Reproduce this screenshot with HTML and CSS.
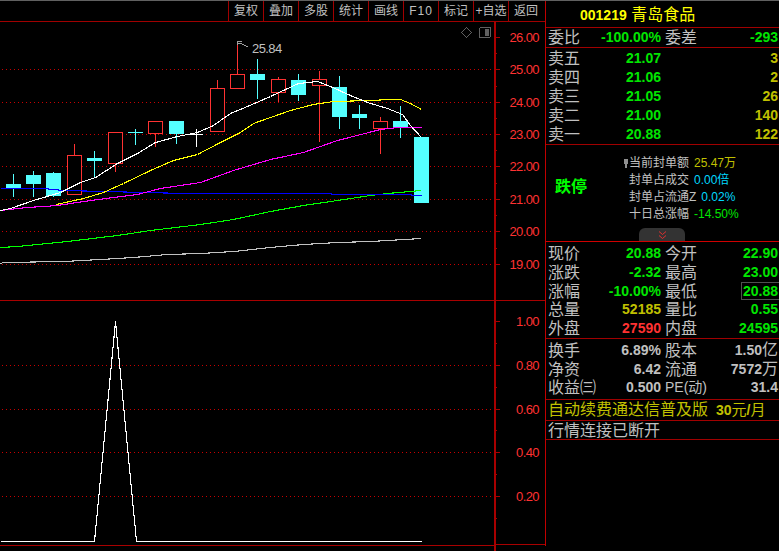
FILE: index.html
```html
<!DOCTYPE html>
<html lang="zh-CN">
<head>
  <meta charset="UTF-8">
  <title>001219 青岛食品</title>
  <link rel="stylesheet" href="styles.css">
</head>
<body>
<div class="page">
  <div class="main">
    <div class="toolbar">
      <span>复权</span><span>叠加</span><span>多股</span><span>统计</span><span>画线</span><span class="latin">F10</span><span>标记</span><span>+自选</span><span>返回</span>
    </div>
    <svg class="chart" width="545" height="529" viewBox="0 22 545 529">
      <!-- 网格 -->
      <g class="grid">
        <path d="M2 69.5H494M2 102.5H494M2 134.5H494M2 166.5H494M2 199.5H494M2 231.5H494M2 264.5H494"/>
        <path d="M2 365.5H494M2 409.5H494M2 452.5H494M2 496.5H494"/>
      </g>
      <!-- 边框和刻度 -->
      <g class="frame">
        <path d="M0 300.5H545M0 545.5H494M494.5 22V551M495.5 22V551M495 544.5H545"/>
        <path d="M495 37.5H500M495 69.5H500M495 102.5H500M495 134.5H500M495 166.5H500M495 199.5H500M495 231.5H500M495 264.5H500"/>
        <path d="M495 53.5H497M495 86.5H497M495 118.5H497M495 150.5H497M495 183.5H497M495 215.5H497M495 248.5H497"/>
        <path d="M495 321.5H500M495 365.5H500M495 409.5H500M495 452.5H500M495 496.5H500"/>
        <path d="M495 343.5H497M495 387.5H497M495 430.5H497M495 474.5H497M495 518.5H497"/>
      </g>
      <g class="axis">
        <text x="539" y="42">26.00</text>
        <text x="539" y="74">25.00</text>
        <text x="539" y="107">24.00</text>
        <text x="539" y="139">23.00</text>
        <text x="539" y="171">22.00</text>
        <text x="539" y="204">21.00</text>
        <text x="539" y="236">20.00</text>
        <text x="539" y="269">19.00</text>
        <text x="539" y="326">1.00</text>
        <text x="539" y="370">0.80</text>
        <text x="539" y="414">0.60</text>
        <text x="539" y="457">0.40</text>
        <text x="539" y="501">0.20</text>
      </g>
      <!-- 右上角小图标 -->
      <path class="icon-line" d="M466.5 27.5L471.5 32.5L466.5 37.5L461.5 32.5Z"/>
      <rect class="icon-line" x="479.5" y="27.5" width="11" height="10" rx="1.5"/>
      <rect class="icon-fill" x="485" y="29" width="4" height="7"/>
      <!-- K线 -->
      <g class="wick-down">
        <path d="M13.5 174V197M33.5 171V197M53.5 172V197M94.5 151V177M135.5 129V145M176.5 134V144M257.5 59V99M298.5 74V101M339.5 76V129M359.5 105V129M400.5 106V138"/>
      </g>
      <g class="wick-up">
        <path d="M74.5 144V155M115.5 164V172M155.5 134V147M217.5 80V88M237.5 45V74M278.5 77V79M278.5 92V102M319.5 71V79M319.5 85V142M380.5 117V121M380.5 128V154"/>
      </g>
      <g class="body-down">
        <rect x="6" y="184" width="15" height="5"/>
        <rect x="26" y="175" width="15" height="9"/>
        <rect x="46" y="173" width="15" height="23"/>
        <rect x="87" y="158" width="15" height="3"/>
        <rect x="128" y="132" width="15" height="1"/>
        <rect x="169" y="121" width="15" height="13"/>
        <rect x="250" y="74" width="15" height="6"/>
        <rect x="291" y="80" width="15" height="15"/>
        <rect x="332" y="87" width="15" height="30"/>
        <rect x="352" y="114" width="15" height="4"/>
        <rect x="393" y="121" width="15" height="6"/>
        <rect x="414" y="137" width="15" height="66"/>
      </g>
      <g class="body-up">
        <rect x="67.5" y="155.5" width="14" height="39"/>
        <rect x="108.5" y="132.5" width="14" height="31"/>
        <rect x="148.5" y="121.5" width="14" height="12"/>
        <rect x="210.5" y="88.5" width="14" height="43"/>
        <rect x="230.5" y="74.5" width="14" height="14"/>
        <rect x="271.5" y="79.5" width="14" height="13"/>
        <rect x="312.5" y="79.5" width="14" height="6"/>
        <rect x="373.5" y="121.5" width="14" height="7"/>
      </g>
      <path class="doji" d="M196.5 129V147M189 134.5H203"/>
      <!-- 均线 -->
      <polyline class="ma gray" points="0,263 3,262 63,261 100,259 133,257 167,254 200,253 233,251 270,247 303,244 337,242 370,241 421,238"/>
      <polyline class="ma green" points="0,247 17,246 67,241 117,235 150,230 200,224 233,219 270,211 303,205 337,200 370,195 387,193 421,190"/>
      <polyline class="ma blue" points="0,188 43,188 63,190 105,191 143,192 187,193 330,193 332,194 410,194 412,195 421,195"/>
      <polyline class="ma magenta" points="0,210 27,207 43,206 57,205 83,201 113,197 137,194 160,188 200,182 233,170 270,159 303,152 337,140 380,129 397,127 421,127"/>
      <polyline class="ma yellow" points="56,204 83,198 103,192 123,183 150,170 173,160 197,154 220,142 240,132 253,123 270,117 290,110 313,104 333,101 370,100 390,99 400,99 410,103 421,109"/>
      <polyline class="ma white" points="0,210 10,208 33,200 60,192 80,182 95,177 117,163 137,153 155,142 177,136 197,132 213,125 230,113 247,106 270,96 285,89 298,83 317,81 330,86 350,95 367,102 387,108 402,114 410,125 421,137"/>
      <!-- 最高价标记 -->
      <path class="flag" d="M237.5 45V41.500H241.500M237.500 43.500H240.500M241 43.500L248 47"/>
      <text class="peak" x="252" y="53">25.84</text>
      <!-- 副图 -->
      <polyline class="ma white" points="0,541 94,541 115,321 136,541 421,541"/>
    </svg>
  </div>

  <div class="side">
    <div class="title"><b>001219</b> 青岛食品</div>
    <div class="block ratio">
      <div class="row"><span>委比</span><b class="green">-100.00%</b><span>委差</span><b class="green">-293</b></div>
    </div>
    <div class="block sells">
      <div class="row"><span>卖五</span><b class="green">21.07</b><span></span><b class="olive">3</b></div>
      <div class="row"><span>卖四</span><b class="green">21.06</b><span></span><b class="olive">2</b></div>
      <div class="row"><span>卖三</span><b class="green">21.05</b><span></span><b class="olive">26</b></div>
      <div class="row"><span>卖二</span><b class="green">21.00</b><span></span><b class="olive">140</b></div>
      <div class="row"><span>卖一</span><b class="green">20.88</b><span></span><b class="olive">122</b></div>
    </div>
    <div class="block limit">
      <div class="limit-name">跌停</div>
      <div class="limit-info">
        <div class="info-row">
          <svg class="pin" width="4" height="9" viewBox="0 0 4 9"><path d="M0 0H4V5H3V9H1V5H0Z"/></svg>
          <span>当前封单额</span><em class="olive">25.47万</em>
        </div>
        <div class="info-row"><span>封单占成交</span><em class="cyan">0.00倍</em></div>
        <div class="info-row"><span>封单占流通Z</span><em class="cyan">0.02%</em></div>
        <div class="info-row"><span>十日总涨幅</span><em class="green">-14.50%</em></div>
      </div>
      <div class="fold">
        <svg width="9" height="8" viewBox="0 0 9 8"><path d="M1 0.500L4.500 3.500L8 0.500M1 4.500L4.500 7.500L8 4.500"/></svg>
      </div>
    </div>
    <div class="block prices">
      <div class="row"><span>现价</span><b class="green">20.88</b><span>今开</span><b class="green">22.90</b></div>
      <div class="row"><span>涨跌</span><b class="green">-2.32</b><span>最高</span><b class="green">23.00</b></div>
      <div class="row"><span>涨幅</span><b class="green">-10.00%</b><span>最低</span><b class="green boxed">20.88</b></div>
      <div class="row"><span>总量</span><b class="olive">52185</b><span>量比</span><b class="green">0.55</b></div>
      <div class="row"><span>外盘</span><b class="red">27590</b><span>内盘</span><b class="green">24595</b></div>
    </div>
    <div class="block stats">
      <div class="row"><span>换手</span><b>6.89%</b><span>股本</span><b>1.50<i>亿</i></b></div>
      <div class="row"><span>净资</span><b>6.42</b><span>流通</span><b>7572<i>万</i></b></div>
      <div class="row"><span>收益㈢</span><b>0.500</b><span class="wide">PE(动)</span><b>31.4</b></div>
    </div>
    <div class="block notice"><span>自动续费通达信普及版</span><b>30<i>元</i>/<i>月</i></b></div>
    <div class="block status">行情连接已断开</div>
  </div>
</div>
</body>
</html>
```

FILE: styles.css
```css
* {
  margin: 0;
  padding: 0;
  box-sizing: border-box;
}

body {
  background-color: #000;
  color: #c0c0c0;
  font-family: "Liberation Sans", "Noto Sans CJK SC", sans-serif;
}

i {
  font-style: normal;
  font-weight: normal;
}

.page {
  display: flex;
  width: 779px;
  height: 551px;
  border-top: 1px solid #606060;
  overflow: hidden;
}

.main {
  width: 545px;
  flex: none;
}

/* 顶部按钮 */
.toolbar {
  display: flex;
  justify-content: flex-end;
  height: 21px;
  padding-right: 2px;
  border-bottom: 1px solid #a00000;
}

.toolbar span {
  width: 35px;
  border-left: 1px solid #a00000;
  font-size: 12px;
  line-height: 20px;
  text-align: center;
}

.toolbar .latin {
  letter-spacing: 1px;
}

/* 图表 */
.chart {
  display: block;
}

.grid path {
  fill: none;
  stroke: #c80000;
  stroke-dasharray: 1 3;
  shape-rendering: crispEdges;
}

.frame path {
  fill: none;
  stroke: #a80000;
  shape-rendering: crispEdges;
}

.axis text {
  fill: #ff3232;
  font-size: 13px;
  letter-spacing: -0.6px;
  text-anchor: end;
}

.icon-line {
  fill: none;
  stroke: #606060;
  shape-rendering: crispEdges;
}

.icon-fill {
  fill: #606060;
}

.wick-down path {
  stroke: #54ffff;
  shape-rendering: crispEdges;
}

.wick-up path {
  stroke: #ff3232;
  shape-rendering: crispEdges;
}

.body-down rect {
  fill: #54ffff;
}

.body-up rect {
  fill: #000;
  stroke: #ff3232;
  shape-rendering: crispEdges;
}

.doji {
  stroke: #fff;
  shape-rendering: crispEdges;
}

.ma {
  fill: none;
  stroke-width: 1.1;
  shape-rendering: crispEdges;
  transform: translate(0.5px, 0.5px);
}

.white { stroke: #fff; }
.yellow { stroke: #ffff00; }
.magenta { stroke: #ff00ff; }
.blue { stroke: #0000ff; }
.green { color: #00e600; }
.ma.green { stroke: #00ff00; }
.ma.gray { stroke: #c0c0c0; }
.olive { color: #c0c000; }
.red { color: #ff3232; }
.cyan { color: #00d8ff; }

.flag {
  fill: none;
  stroke: #a0a0a0;
  shape-rendering: crispEdges;
}

.peak {
  fill: #c0c0c0;
  font-size: 13px;
  letter-spacing: -0.6px;
}

/* 右侧盘口 */
.side {
  width: 234px;
  height: 545px;
  border-left: 1px solid #c00000;
}

.title {
  height: 27px;
  padding-left: 34px;
  border-bottom: 1px solid #a00000;
  color: #ffff00;
  font-size: 16px;
  line-height: 27px;
}

.title b {
  font-size: 14px;
}

.block {
  border-bottom: 1px solid #a00000;
}

.row {
  display: grid;
  grid-template-columns: 32px 81px 32px 1fr;
  align-items: center;
  height: 19px;
  padding: 0 1px 0 2px;
  font-size: 16px;
  line-height: 19px;
}

.row span {
  white-space: nowrap;
}

.row b {
  font-size: 14px;
  text-align: right;
  white-space: nowrap;
}

.row b i {
  font-size: 16px;
}

.row span:nth-child(3) {
  margin-left: 4px;
}

.ratio {
  height: 20px;
}

.sells {
  height: 97px;
  padding-top: 1px;
}

/* 封单信息 */
.limit {
  display: flex;
  position: relative;
  height: 97px;
  border-bottom-color: #d00000;
}

.limit-name {
  width: 83px;
  padding: 33px 0 0 9px;
  color: #00ff00;
  font-size: 16px;
  font-weight: bold;
  line-height: 18px;
}

.limit-info {
  padding-top: 10px;
}

.info-row {
  display: flex;
  gap: 5px;
  height: 17px;
  font-size: 12px;
  line-height: 17px;
}

.info-row em {
  font-style: normal;
}

.pin {
  align-self: center;
  margin: 0 -4px 0 -5px;
  fill: #909090;
}

.fold {
  display: flex;
  justify-content: center;
  align-items: center;
  position: absolute;
  left: 93px;
  bottom: 0;
  width: 46px;
  height: 13px;
  border-radius: 6px 6px 0 0;
  background-color: #333;
}

.fold path {
  fill: none;
  stroke: #e03030;
}

.prices {
  height: 97px;
  padding-top: 2px;
}

.prices .row {
  height: 18.800px;
}

.boxed {
  justify-self: end;
  width: 38px;
  margin-right: -1px;
  padding-right: 1px;
  border: 1px solid #505050;
  border-right: 0;
  line-height: 16px;
}

.stats {
  height: 61px;
  padding-top: 1px;
}

.wide {
  font-size: 14px;
}

.notice {
  display: flex;
  gap: 8px;
  height: 21px;
  padding-left: 2px;
  color: #c0c000;
  font-size: 16px;
  line-height: 20px;
}

.notice b {
  font-size: 14px;
}

.notice b i {
  font-size: 15px;
}

.status {
  height: 19px;
  padding-left: 2px;
  font-size: 16px;
  line-height: 20px;
}
```
